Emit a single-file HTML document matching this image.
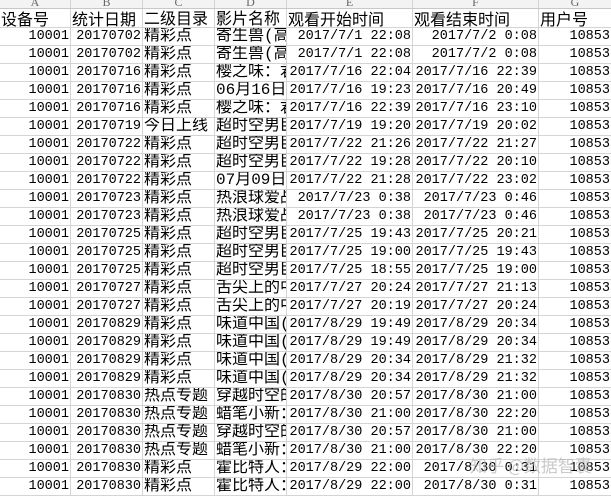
<!DOCTYPE html>
<html><head><meta charset="utf-8"><style>
body{margin:0;width:611px;height:493px;overflow:hidden;background:#fff;position:relative}
.r{display:flex;height:18px;box-sizing:border-box;border-bottom:1px solid #d4d4d4}
.r>div{box-sizing:border-box;border-right:1px solid #d4d4d4;overflow:hidden;white-space:nowrap;line-height:18px;font-family:"Liberation Mono","Noto Sans CJK SC",monospace;font-size:13.5px;color:#000;padding:0 1px}
.c1{width:71px;text-align:right}.c2{width:72px;text-align:right}.c3{width:72px;font-size:16px!important;line-height:17px!important}.c4{width:72px;font-size:16px!important;line-height:17px!important}
.c5{width:126px;text-align:right}.c6{width:126px;text-align:right}.c7{width:72px;text-align:right;border-right:none!important}
.h{height:9px;background:#f3f3f3;border-bottom:1px solid #c8c8c8}
.h>div{line-height:4px!important;font-size:12px!important;color:#666;text-align:center!important;font-family:"Liberation Serif",serif;overflow:hidden}
.hd>div{text-align:left!important;font-family:"Noto Sans CJK SC",sans-serif!important;font-size:16px!important;line-height:18px}
.hd{height:19px}
.wm{position:absolute;left:470px;top:452px;font-family:"Noto Sans CJK SC",sans-serif;font-size:17px;color:rgba(180,180,180,0.7)}
</style></head><body>
<div class="r h"><div class="c1">A</div><div class="c2">B</div><div class="c3">C</div><div class="c4">D</div><div class="c5">E</div><div class="c6">F</div><div class="c7">G</div></div>
<div class="r hd"><div class="c1">设备号</div><div class="c2">统计日期</div><div class="c3">二级目录</div><div class="c4">影片名称</div><div class="c5">观看开始时间</div><div class="c6">观看结束时间</div><div class="c7">用户号</div></div>
<div class="r"><div class="c1">10001</div><div class="c2">20170702</div><div class="c3">精彩点</div><div class="c4">寄生兽(高清</div><div class="c5">2017/7/1 22:08</div><div class="c6">2017/7/2 0:08</div><div class="c7">10853</div></div>
<div class="r"><div class="c1">10001</div><div class="c2">20170702</div><div class="c3">精彩点</div><div class="c4">寄生兽(高清</div><div class="c5">2017/7/1 22:08</div><div class="c6">2017/7/2 0:08</div><div class="c7">10853</div></div>
<div class="r"><div class="c1">10001</div><div class="c2">20170716</div><div class="c3">精彩点</div><div class="c4">樱之味：君</div><div class="c5">2017/7/16 22:04</div><div class="c6">2017/7/16 22:39</div><div class="c7">10853</div></div>
<div class="r"><div class="c1">10001</div><div class="c2">20170716</div><div class="c3">精彩点</div><div class="c4">06月16日</div><div class="c5">2017/7/16 19:23</div><div class="c6">2017/7/16 20:49</div><div class="c7">10853</div></div>
<div class="r"><div class="c1">10001</div><div class="c2">20170716</div><div class="c3">精彩点</div><div class="c4">樱之味：君</div><div class="c5">2017/7/16 22:39</div><div class="c6">2017/7/16 23:10</div><div class="c7">10853</div></div>
<div class="r"><div class="c1">10001</div><div class="c2">20170719</div><div class="c3">今日上线</div><div class="c4">超时空男臣</div><div class="c5">2017/7/19 19:20</div><div class="c6">2017/7/19 20:02</div><div class="c7">10853</div></div>
<div class="r"><div class="c1">10001</div><div class="c2">20170722</div><div class="c3">精彩点</div><div class="c4">超时空男臣</div><div class="c5">2017/7/22 21:26</div><div class="c6">2017/7/22 21:27</div><div class="c7">10853</div></div>
<div class="r"><div class="c1">10001</div><div class="c2">20170722</div><div class="c3">精彩点</div><div class="c4">超时空男臣</div><div class="c5">2017/7/22 19:28</div><div class="c6">2017/7/22 20:10</div><div class="c7">10853</div></div>
<div class="r"><div class="c1">10001</div><div class="c2">20170722</div><div class="c3">精彩点</div><div class="c4">07月09日</div><div class="c5">2017/7/22 21:28</div><div class="c6">2017/7/22 23:02</div><div class="c7">10853</div></div>
<div class="r"><div class="c1">10001</div><div class="c2">20170723</div><div class="c3">精彩点</div><div class="c4">热浪球爱战</div><div class="c5">2017/7/23 0:38</div><div class="c6">2017/7/23 0:46</div><div class="c7">10853</div></div>
<div class="r"><div class="c1">10001</div><div class="c2">20170723</div><div class="c3">精彩点</div><div class="c4">热浪球爱战</div><div class="c5">2017/7/23 0:38</div><div class="c6">2017/7/23 0:46</div><div class="c7">10853</div></div>
<div class="r"><div class="c1">10001</div><div class="c2">20170725</div><div class="c3">精彩点</div><div class="c4">超时空男臣</div><div class="c5">2017/7/25 19:43</div><div class="c6">2017/7/25 20:21</div><div class="c7">10853</div></div>
<div class="r"><div class="c1">10001</div><div class="c2">20170725</div><div class="c3">精彩点</div><div class="c4">超时空男臣</div><div class="c5">2017/7/25 19:00</div><div class="c6">2017/7/25 19:43</div><div class="c7">10853</div></div>
<div class="r"><div class="c1">10001</div><div class="c2">20170725</div><div class="c3">精彩点</div><div class="c4">超时空男臣</div><div class="c5">2017/7/25 18:55</div><div class="c6">2017/7/25 19:00</div><div class="c7">10853</div></div>
<div class="r"><div class="c1">10001</div><div class="c2">20170727</div><div class="c3">精彩点</div><div class="c4">舌尖上的中</div><div class="c5">2017/7/27 20:24</div><div class="c6">2017/7/27 21:13</div><div class="c7">10853</div></div>
<div class="r"><div class="c1">10001</div><div class="c2">20170727</div><div class="c3">精彩点</div><div class="c4">舌尖上的中</div><div class="c5">2017/7/27 20:19</div><div class="c6">2017/7/27 20:24</div><div class="c7">10853</div></div>
<div class="r"><div class="c1">10001</div><div class="c2">20170829</div><div class="c3">精彩点</div><div class="c4">味道中国(</div><div class="c5">2017/8/29 19:49</div><div class="c6">2017/8/29 20:34</div><div class="c7">10853</div></div>
<div class="r"><div class="c1">10001</div><div class="c2">20170829</div><div class="c3">精彩点</div><div class="c4">味道中国(</div><div class="c5">2017/8/29 19:49</div><div class="c6">2017/8/29 20:34</div><div class="c7">10853</div></div>
<div class="r"><div class="c1">10001</div><div class="c2">20170829</div><div class="c3">精彩点</div><div class="c4">味道中国(</div><div class="c5">2017/8/29 20:34</div><div class="c6">2017/8/29 21:32</div><div class="c7">10853</div></div>
<div class="r"><div class="c1">10001</div><div class="c2">20170829</div><div class="c3">精彩点</div><div class="c4">味道中国(</div><div class="c5">2017/8/29 20:34</div><div class="c6">2017/8/29 21:32</div><div class="c7">10853</div></div>
<div class="r"><div class="c1">10001</div><div class="c2">20170830</div><div class="c3">热点专题</div><div class="c4">穿越时空的</div><div class="c5">2017/8/30 20:57</div><div class="c6">2017/8/30 21:00</div><div class="c7">10853</div></div>
<div class="r"><div class="c1">10001</div><div class="c2">20170830</div><div class="c3">热点专题</div><div class="c4">蜡笔小新：</div><div class="c5">2017/8/30 21:00</div><div class="c6">2017/8/30 22:20</div><div class="c7">10853</div></div>
<div class="r"><div class="c1">10001</div><div class="c2">20170830</div><div class="c3">热点专题</div><div class="c4">穿越时空的</div><div class="c5">2017/8/30 20:57</div><div class="c6">2017/8/30 21:00</div><div class="c7">10853</div></div>
<div class="r"><div class="c1">10001</div><div class="c2">20170830</div><div class="c3">热点专题</div><div class="c4">蜡笔小新：</div><div class="c5">2017/8/30 21:00</div><div class="c6">2017/8/30 22:20</div><div class="c7">10853</div></div>
<div class="r"><div class="c1">10001</div><div class="c2">20170830</div><div class="c3">精彩点</div><div class="c4">霍比特人：</div><div class="c5">2017/8/29 22:00</div><div class="c6">2017/8/30 0:31</div><div class="c7">10853</div></div>
<div class="r"><div class="c1">10001</div><div class="c2">20170830</div><div class="c3">精彩点</div><div class="c4">霍比特人：</div><div class="c5">2017/8/29 22:00</div><div class="c6">2017/8/30 0:31</div><div class="c7">10853</div></div>
<div class="wm">知乎 @数据智囊</div>
</body></html>
